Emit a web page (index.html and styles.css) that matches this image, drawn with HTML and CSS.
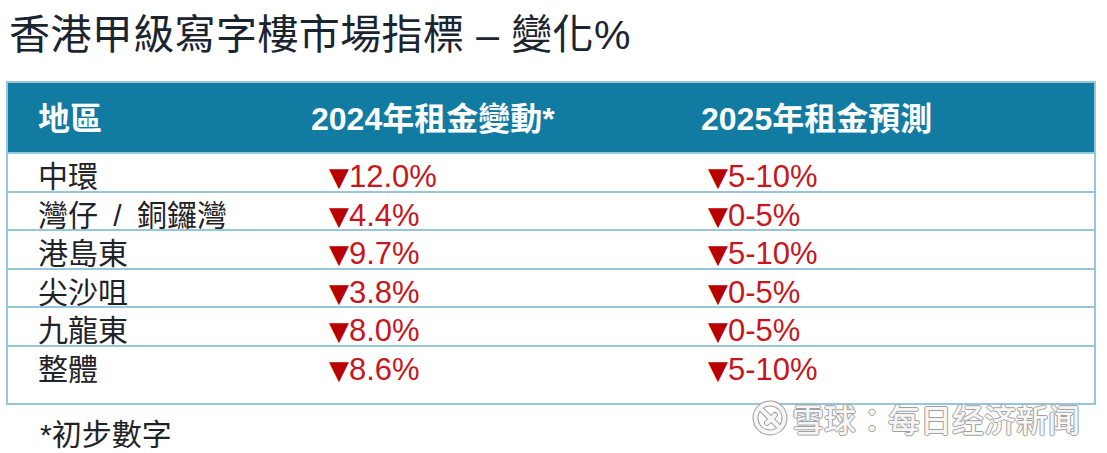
FILE: index.html
```html
<!DOCTYPE html>
<html lang="zh-Hant">
<head>
<meta charset="utf-8">
<title>香港甲級寫字樓市場指標</title>
<link rel="stylesheet" href="styles.css">
</head>
<body>
<div class="page">
  <h1 class="title">香港甲級寫字樓市場指標 <span class="dash">–</span> 變化%</h1>
  <div class="table">
    <div class="row head">
      <div class="c1">地區</div>
      <div class="c2">2024年租金變動*</div>
      <div class="c3">2025年租金預測</div>
    </div>
    <div class="row">
      <div class="c1">中環</div>
      <div class="c2 val v2"><span class="tri">▼</span>12.0%</div>
      <div class="c3 val v3"><span class="tri">▼</span>5-10%</div>
    </div>
    <div class="row">
      <div class="c1">灣仔 <span class="sep">/</span> 銅鑼灣</div>
      <div class="c2 val v2"><span class="tri">▼</span>4.4%</div>
      <div class="c3 val v3"><span class="tri">▼</span>0-5%</div>
    </div>
    <div class="row">
      <div class="c1">港島東</div>
      <div class="c2 val v2"><span class="tri">▼</span>9.7%</div>
      <div class="c3 val v3"><span class="tri">▼</span>5-10%</div>
    </div>
    <div class="row">
      <div class="c1">尖沙咀</div>
      <div class="c2 val v2"><span class="tri">▼</span>3.8%</div>
      <div class="c3 val v3"><span class="tri">▼</span>0-5%</div>
    </div>
    <div class="row">
      <div class="c1">九龍東</div>
      <div class="c2 val v2"><span class="tri">▼</span>8.0%</div>
      <div class="c3 val v3"><span class="tri">▼</span>0-5%</div>
    </div>
    <div class="row last">
      <div class="c1">整體</div>
      <div class="c2 val v2"><span class="tri">▼</span>8.6%</div>
      <div class="c3 val v3"><span class="tri">▼</span>5-10%</div>
    </div>
  </div>
  <p class="note">*初步數字</p>
  <div class="watermark">
    <svg class="wm-logo" viewBox="0 0 36 36" width="36" height="36" aria-hidden="true">
      <g fill="none" stroke="#9a9a9a" stroke-width="6" stroke-linecap="round">
        <circle cx="18" cy="18" r="14.5"/>
        <path d="M10 10 L26 26 M15 23 L23 15"/>
      </g>
      <g fill="none" stroke="#f6f6f6" stroke-width="4" stroke-linecap="round">
        <circle cx="18" cy="18" r="14.5"/>
        <path d="M10 10 L26 26 M15 23 L23 15"/>
      </g>
    </svg>
    <span class="wm-text">雪球：每日经济新闻</span>
  </div>
</div>
</body>
</html>
```

FILE: styles.css
```css
html, body {
  margin: 0;
  padding: 0;
  background: #ffffff;
}

.page {
  position: relative;
  width: 1107px;
  height: 453px;
  overflow: hidden;
  font-family: "Liberation Sans", "Noto Sans CJK TC", sans-serif;
  color: #1f2327;
}

.title {
  margin: 0;
  padding: 11px 0 0 9px;
  height: 81px;
  box-sizing: border-box;
  font-size: 41px;
  line-height: 48px;
  font-weight: normal;
  color: #1b2530;
  letter-spacing: 0.4px;
}

.dash {
  font-family: "Liberation Sans", sans-serif;
}

.table {
  margin-left: 6px;
  width: 1090px;
  border: 2px solid #95c6da;
  box-sizing: border-box;
}

.row {
  display: grid;
  grid-template-columns: 273px 390px 1fr;
  padding-left: 30px;
  height: 36.5px;
  border-top: 2px solid #95c6da;
  align-items: center;
  font-size: 30px;
  line-height: 36px;
}

.row.head {
  height: 69px;
  border-top: 0;
  background: #117ba1;
  color: #ffffff;
  font-weight: bold;
  font-size: 32px;
  padding-top: 2px;
  box-sizing: border-box;
}

.row.last {
  height: 56px;
  align-items: start;
}

.c1 {
  color: #1f2327;
  padding-top: 5px;
}

.sep {
  margin: 0 7px;
}

.head .c1, .head .c2, .head .c3 {
  color: #ffffff;
  padding-top: 0;
}

.val {
  color: #c8161d;
  font-size: 31px;
  padding-top: 5px;
  display: flex;
  align-items: center;
}

.v2 {
  padding-left: 18px;
}

.v3 {
  padding-left: 7px;
}

.tri {
  font-family: "DejaVu Sans", sans-serif;
  font-size: 26px;
  color: #b80000;
  margin-right: 0;
}

.note {
  margin: 12px 0 0 40px;
  font-size: 30px;
  line-height: 36px;
  color: #1f2327;
}

.watermark {
  position: absolute;
  left: 752px;
  top: 398px;
  display: flex;
  align-items: center;
  gap: 4px;
}

.wm-text {
  font-family: "Noto Sans CJK SC", sans-serif;
  font-size: 32px;
  line-height: 40px;
  font-weight: 500;
  color: #f6f6f6;
  text-shadow: 1px 0 0 #a0a0a0, -1px 0 0 #a0a0a0, 0 1px 0 #a0a0a0, 0 -1px 0 #a0a0a0;
}
```
